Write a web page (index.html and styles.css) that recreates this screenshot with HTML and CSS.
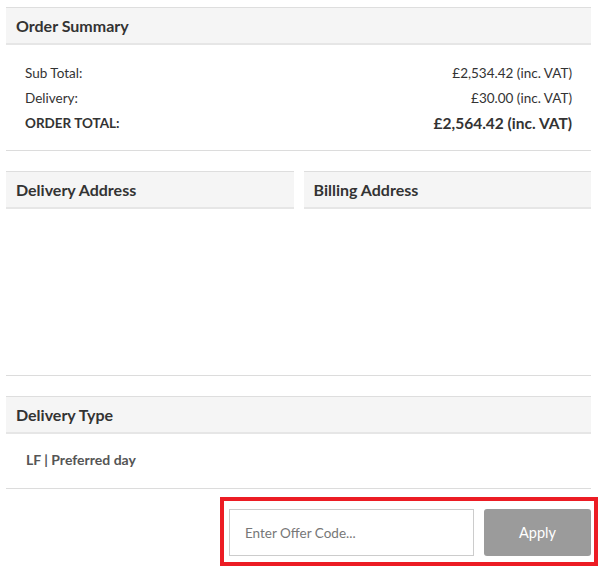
FILE: index.html
```html
<!DOCTYPE html>
<html lang="en">
<head>
<meta charset="utf-8">
<title>Order Summary</title>
<link rel="stylesheet" href="styles.css">
</head>
<body>
<div class="page">
  <section class="block">
    <h2 class="panel-head">Order Summary</h2>
    <div class="summary">
      <div class="row"><span>Sub Total:</span><span>£2,534.42 (inc. VAT)</span></div>
      <div class="row"><span>Delivery:</span><span>£30.00 (inc. VAT)</span></div>
      <div class="row total"><span>ORDER TOTAL:</span><span class="total-value">£2,564.42 (inc. VAT)</span></div>
    </div>
  </section>

  <section class="block addresses">
    <div class="address">
      <h2 class="panel-head">Delivery Address</h2>
      <div class="address-body"></div>
    </div>
    <div class="address">
      <h2 class="panel-head">Billing Address</h2>
      <div class="address-body"></div>
    </div>
  </section>

  <section class="block delivery-type">
    <h2 class="panel-head">Delivery Type</h2>
    <div class="type-body">LF | Preferred day</div>
  </section>

  <div class="offer-wrap">
    <div class="offer">
      <input class="offer-input" type="text" placeholder="Enter Offer Code...">
      <button class="offer-btn" type="button">Apply</button>
    </div>
  </div>
</div>
</body>
</html>
```

FILE: styles.css
```css
html, body {
  margin: 0;
  padding: 0;
  background: #fff;
}

body {
  font-family: Lato, "Open Sans", Arial, sans-serif;
  color: #333;
}

.page {
  width: 585px;
  padding: 7px 0 0 6px;
}

.block {
  border-bottom: 1px solid #dcdcdc;
}

.panel-head {
  margin: 0;
  height: 35px;
  line-height: 36px;
  padding-left: 10px;
  background: #f5f5f5;
  border-top: 1px solid #dedede;
  border-bottom: 2px solid #e6e6e6;
  font-size: 16px;
  font-weight: 700;
  color: #333;
}

.summary {
  padding: 15px 19px 15px 19px;
}

.row {
  display: flex;
  justify-content: space-between;
  align-items: center;
  height: 25px;
  font-size: 13.5px;
  color: #333;
}

.row.total {
  font-weight: 700;
}

.total-value {
  font-size: 15.5px;
}

.addresses {
  display: flex;
  gap: 10px;
  margin-top: 20px;
}

.address {
  flex: 1;
}

.address-body {
  height: 166px;
}

.delivery-type {
  margin-top: 20px;
}

.type-body {
  padding: 13px 20px 16px 20px;
  height: 25px;
  line-height: 25px;
  font-size: 14px;
  font-weight: 700;
  color: #555;
}

.offer-wrap {
  display: flex;
  justify-content: flex-end;
  margin-top: 8px;
  margin-right: -7px;
}

.offer {
  display: flex;
  gap: 10px;
  width: 362px;
  padding: 8px 3px 6px 5px;
  border: 4px solid #ec1c24;
}

.offer-input {
  box-sizing: border-box;
  width: 245px;
  height: 47px;
  margin: 0;
  padding: 0 15px;
  border: 1px solid #cccccc;
  font-family: Lato, "Open Sans", Arial, sans-serif;
  font-size: 13.5px;
  color: #333;
  outline: none;
}

.offer-input::placeholder {
  color: #777;
}

.offer-btn {
  box-sizing: border-box;
  width: 107px;
  height: 47px;
  margin: 0;
  border: none;
  border-radius: 3px;
  background: #9b9b9b;
  color: #fff;
  font-family: Lato, "Open Sans", Arial, sans-serif;
  font-size: 14.5px;
  cursor: pointer;
}
```
